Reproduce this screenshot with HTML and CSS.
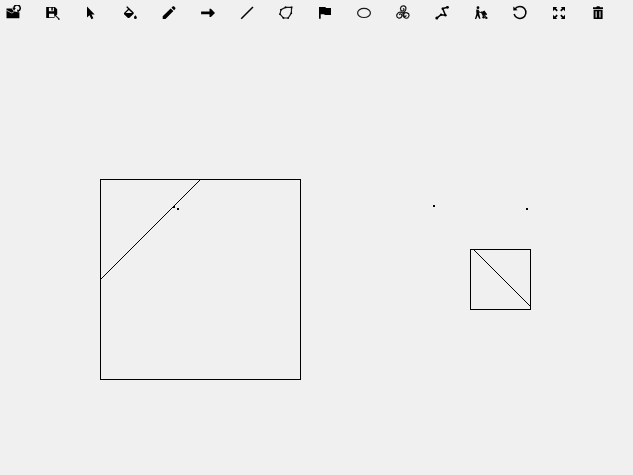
FILE: index.html
```html
<!DOCTYPE html>
<html lang="en">
<head>
<meta charset="utf-8">
<title>Drawing board</title>
<link rel="stylesheet" href="styles.css">
</head>
<body>
<nav class="toolbar">
<button class="tool" aria-label="Open"><svg viewBox="0 0 16 16"><path class="fill" d="M1.5 3.6h5.2l2 2.6 4.5 1.1h1.2v6H1.5z"/><path class="gap" d="M1.3 5.2l5.6 2.9 2.2-1.6"/><path class="stroke" d="M9 3.2A3.1 3.1 0 1 1 13.2 6"/><path class="fill" d="M7.2 2.8l3.6.3-1.7 2.6zM12 4.6l3 1-2.4 1.8z"/></svg></button>
<button class="tool" aria-label="Save"><svg viewBox="0 0 16 16"><path class="fill" fill-rule="evenodd" d="M2.2 2h8.7l2.3 2.3V9l-1.7.3L10 8.8H5v3.4h5.2l.8.9H2.2zM4.9 2.8v3.5h5V2.8H8.8v2.6H7.3V2.8z"/><path class="thin" d="M11.3 10.3l3.6 3.6"/><path class="fill" d="M10 9h3.5l-3 3zM14 13.2l1.6.3-.1 1.5-1.3-.3z"/></svg></button>
<button class="tool" aria-label="Select"><svg viewBox="0 0 16 16"><path class="fill" d="M4 1.5v11l2.5-2.3 1.9 4 2-.9-1.9-3.9h3.2z"/></svg></button>
<button class="tool" aria-label="Fill"><svg viewBox="0 0 16 16"><path class="fill" fill-rule="evenodd" d="M4.2 2l1-.8 6.5 6.4v1.1l-4.5 4.4H6L2 9.2V8l4-4.1zM6.9 4.9L3.7 8h6.4z"/><circle class="fill" cx="13.4" cy="12.7" r="1.4"/><path class="fill" d="M13.3 10l1.2 2.2h-2.3z"/></svg></button>
<button class="tool" aria-label="Pencil"><svg viewBox="0 0 16 16"><path class="fill" d="M1.7 11.3l8-7.9 2.7 2.7-7.9 7.8H1.7zM10.5 2.7l1.4-1.4h1l1.5 1.5v1l-1.3 1.4z"/></svg></button>
<button class="tool" aria-label="Arrow"><svg viewBox="0 0 16 16"><path class="fill" d="M1.1 6.6h8.4V3.7h1.4L15 7.9l-4.1 4.2H9.5V9.2H1.1z"/></svg></button>
<button class="tool" aria-label="Line"><svg viewBox="0 0 16 16"><path class="stroke" d="M2.2 13.7L14 2"/></svg></button>
<button class="tool" aria-label="Polygon"><svg viewBox="0 0 16 16"><path class="thin" d="M7.5 2.4h6.1l-.3 5.8-3.1 4.8H5.4L2 9.2l1-4.5z"/><path class="fill" d="M6.8 1.6h1.6v1.6H6.8zM12.8 1.6h1.6v1.6h-1.6zM12.5 7.4h1.6V9h-1.6zM9.4 12.2H11v1.6H9.4zM4.6 12.1h1.6v1.6H4.6zM1.2 8.4h1.6V10H1.2zM2.2 3.9h1.6v1.6H2.2z"/></svg></button>
<button class="tool" aria-label="Flag"><svg viewBox="0 0 16 16"><path class="fill" d="M2 2h6.2l1 1.1H14v7H8L7 9.2H3.7v4.6H2z"/></svg></button>
<button class="tool" aria-label="Ellipse"><svg viewBox="0 0 16 16"><ellipse class="thin" cx="8" cy="7.9" rx="6.4" ry="4.6"/></svg></button>
<button class="tool" aria-label="Spiral"><svg viewBox="0 0 16 16"><path class="thin" d="M8 8.2C9 7 11 6 10.9 3.8A2.7 2.7 0 1 0 7.6 6.2C9.5 6 9.5 3.5 7.9 3.7M8 8.2C6.3 7 3.8 6.6 2.5 8.7A2.6 2.6 0 1 0 6.9 10.2C6.3 8.3 4.1 8.7 4.6 10M8 8.2C8.2 10 7.7 12.3 10.3 13A2.7 2.7 0 1 0 8.7 9.5C8.4 11.5 10.8 12.1 11.2 10.4"/></svg></button>
<button class="tool" aria-label="Polyline"><svg viewBox="0 0 16 16"><path class="stroke" d="M2.8 13.2L7 9.7l4.4.5L8.7 3.6l4.9-1.4"/><circle class="fill" cx="2.8" cy="13.1" r="1.5"/><circle class="fill" cx="7" cy="9.7" r="1.1"/><circle class="fill" cx="11.4" cy="10.2" r="1.2"/><circle class="fill" cx="8.7" cy="3.7" r="1.2"/><circle class="fill" cx="13.5" cy="2.3" r="1.4"/></svg></button>
<button class="tool" aria-label="Move"><svg viewBox="0 0 16 16"><circle class="fill" cx="5" cy="2.7" r="1.4"/><path class="fill" d="M3.2 4.6l2.5.1.6 4.5 1.2 4.6H6.1L4.7 10.4l-1.5 3.5H1.9L3.4 9zM8.2 7.2l3.2-1.7 2.3 3.2-3.4 2.6z"/><path class="thin" d="M4.9 5.3l1.7 2 2 .2M8.1 6.4l2.3 4.5 3.5-1.9M11.8 10.8l2.6 2.6"/><circle class="fill" cx="10.6" cy="12.2" r="1.3"/><circle class="fill" cx="13.2" cy="13" r="1.1"/></svg></button>
<button class="tool" aria-label="Undo"><svg viewBox="0 0 16 16"><path class="stroke" d="M3.1 3.8A6 6 0 1 1 2.1 9"/><path class="fill" d="M1.3 1.5l4.3 3.8-4.3.3z"/></svg></button>
<button class="tool" aria-label="Expand"><svg viewBox="0 0 16 16"><path class="fill" d="M2 2h4.2L4.9 3.3l1.9 1.9-1.2 1.2-1.9-1.9L2 6.2zM14 2v4.2l-1.7-1.7-1.9 1.9-1.2-1.2 1.9-1.9L9.8 2zM2 14V9.8l1.7 1.7 1.9-1.9 1.2 1.2-1.9 1.9L6.2 14zM14 14H9.8l1.3-1.3-1.9-1.9 1.2-1.2 1.9 1.9L14 9.8z"/></svg></button>
<button class="tool" aria-label="Delete"><svg viewBox="0 0 16 16"><path class="fill" fill-rule="evenodd" d="M3 2.2h3.2l.8-.9h2.3l.8.9H13v1.7H3zM3.6 4.8h9v9.1h-9zM5.6 6.3v6.1h1.1V6.3zM9.4 6.3v6.1h1.1V6.3z"/></svg></button>
</nav>
<main class="board">
<svg class="drawing" viewBox="0 26 633 449" shape-rendering="crispEdges">
<rect class="shape" x="100.5" y="179.5" width="200" height="200"/>
<path class="shape" d="M100.5 279.5L200.5 179.5"/>
<rect class="shape" x="470.5" y="249.5" width="60" height="60"/>
<path class="shape" d="M473.5 249.5L530.5 306.5"/>
<path class="fill" d="M173 206h2v2h-2zM177 208h2v2h-2zM433 205h2v2h-2zM526 208h2v2h-2z"/>
</svg>
</main>
</body>
</html>
```
FILE: styles.css
```css
body {
  margin: 0;
  height: 100vh;
  display: flex;
  flex-direction: column;
  overflow: hidden;
  background: #f0f0f0;
  font-family: "Liberation Sans", sans-serif;
}

.toolbar {
  display: flex;
  gap: 23px;
  height: 21px;
  padding: 5px 0 0 5px;
}

.tool {
  width: 16px;
  height: 16px;
  padding: 0;
  border: 0;
  background: none;
}

.tool svg,
.drawing {
  display: block;
}

.board {
  flex: 1;
}

.drawing {
  width: 633px;
  height: 449px;
}

.fill {
  fill: #000;
}

.stroke,
.thin,
.shape,
.gap {
  fill: none;
  stroke: #000;
  stroke-width: 1.5;
}

.thin {
  stroke: #181818;
  stroke-width: 1.2;
}

.shape {
  stroke-width: 1;
}

.gap {
  stroke: #f0f0f0;
  stroke-width: 0.7;
}
```
